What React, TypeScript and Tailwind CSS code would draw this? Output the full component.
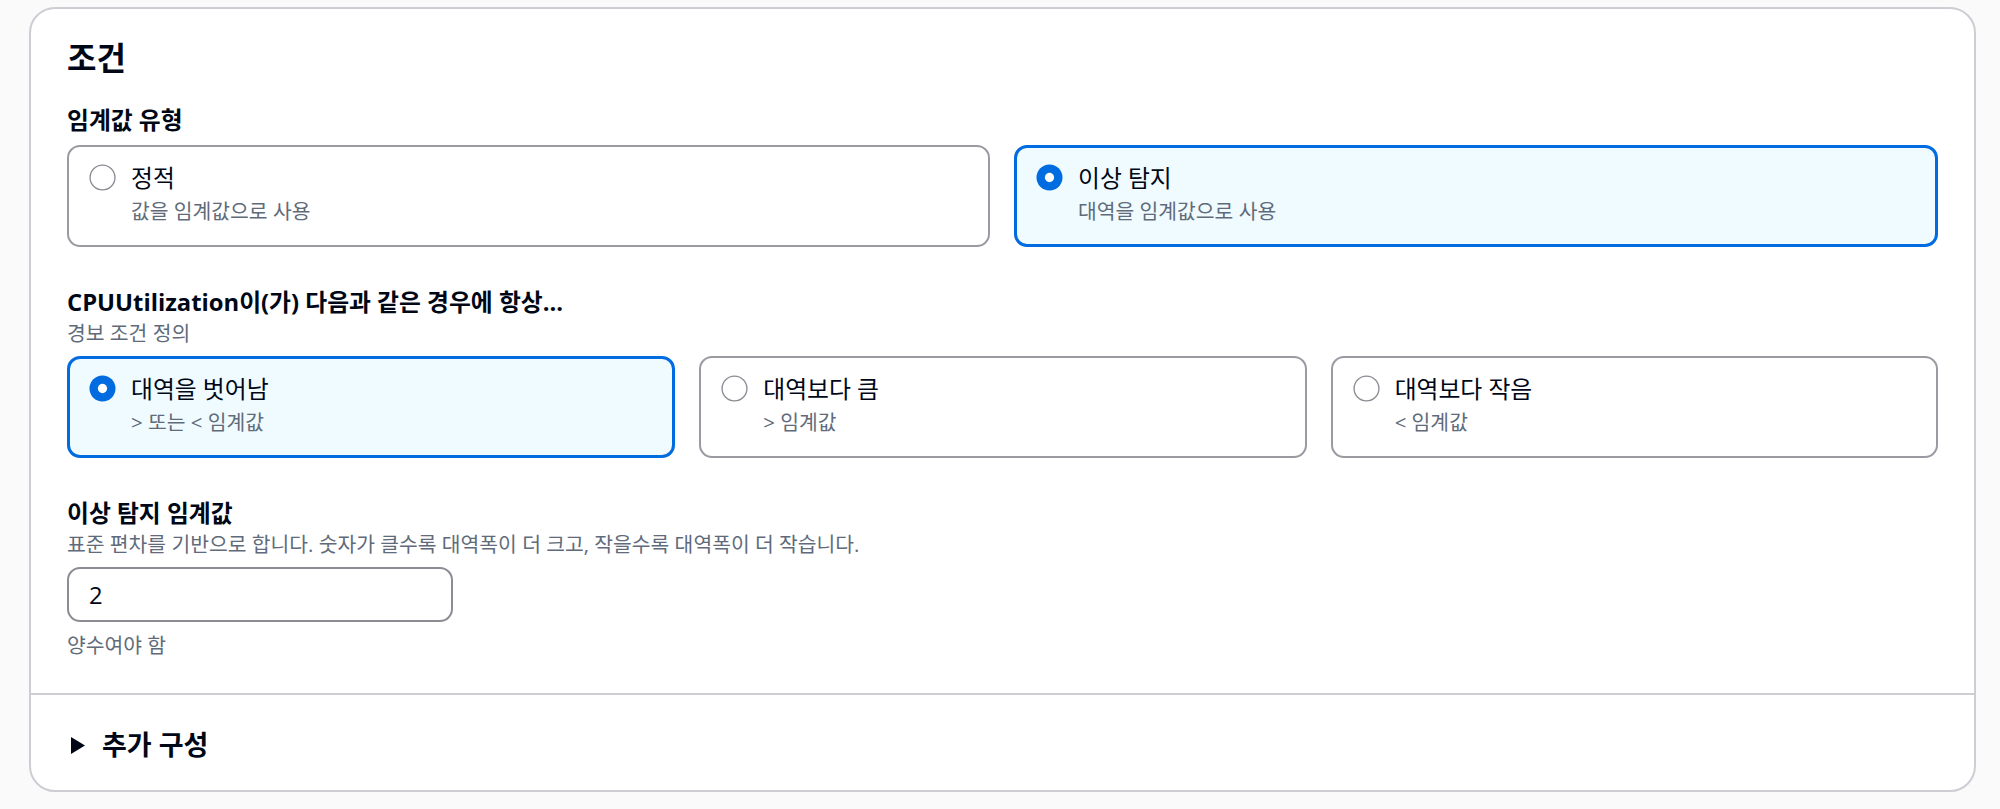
import React from "react";

const FONT = { fontFamily: '"Open Sans", "Noto Sans CJK KR", sans-serif' };

function Radio({ checked }: { checked: boolean }) {
  return (
    <svg width="27" height="27" viewBox="0 0 28 28" className="shrink-0">
      {checked ? (
        <>
          <circle cx="14" cy="14" r="13.5" fill="#006ce0" />
          <circle cx="14" cy="14" r="4.8" fill="#ffffff" />
        </>
      ) : (
        <circle cx="14" cy="14" r="12.9" fill="#ffffff" stroke="#8c8c94" strokeWidth="1.4" />
      )}
    </svg>
  );
}

interface TileProps {
  label: string;
  desc: string;
  checked?: boolean;
}

function Tile({ label, desc, checked = false }: TileProps) {
  return (
    <div
      className={`flex-1 rounded-[13px] h-[102px] ${
        checked
          ? "border-[3px] border-[#006ce0] bg-[#f0fbff] pt-[13.5px] pl-[19px]"
          : "border-2 border-[#9a9aa2] bg-white pt-[14.5px] pl-[20px]"
      }`}
    >
      <div className="flex items-center h-[32px] gap-[15px]">
        <Radio checked={checked} />
        <span className="text-[23.8px] leading-[32px] text-[#000716]">{label}</span>
      </div>
      <p className="pl-[42px] text-[20.4px] leading-[35px] text-[#5f6b7a]">{desc}</p>
    </div>
  );
}

function FieldLabel({ children }: { children: React.ReactNode }) {
  return <p className="text-[23.8px] leading-[32px] font-bold text-[#000716]">{children}</p>;
}

function FieldDesc({ children }: { children: React.ReactNode }) {
  return <p className="text-[20.4px] leading-[31px] text-[#5f6b7a]">{children}</p>;
}

export default function App() {
  return (
    <div className="min-h-screen bg-[#fafafa] pt-[7px]" style={FONT}>
      <div className="ml-[29px] w-[1947px] h-[785px] rounded-[26px] border-2 border-[#cdcdd3] bg-white overflow-hidden">
        {/* ─── 조건 ─── */}
        <div className="px-[36px] pt-[30px]">
          <h2 className="text-[32px] leading-[38px] font-bold text-[#000716]">조건</h2>

          {/* 임계값 유형 */}
          <div className="mt-[26.5px]">
            <FieldLabel>임계값 유형</FieldLabel>
            <div className="mt-[9.5px] flex gap-6">
              <Tile label="정적" desc="값을 임계값으로 사용" />
              <Tile label="이상 탐지" desc="대역을 임계값으로 사용" checked />
            </div>
          </div>

          {/* 경보 조건 */}
          <div className="mt-[39px]">
            <FieldLabel>CPUUtilization이(가) 다음과 같은 경우에 항상...</FieldLabel>
            <FieldDesc>경보 조건 정의</FieldDesc>
            <div className="mt-[7px] flex gap-6">
              <Tile label="대역을 벗어남" desc="> 또는 < 임계값" checked />
              <Tile label="대역보다 큼" desc="> 임계값" />
              <Tile label="대역보다 작음" desc="< 임계값" />
            </div>
          </div>

          {/* 이상 탐지 임계값 */}
          <div className="mt-[38.5px]">
            <FieldLabel>이상 탐지 임계값</FieldLabel>
            <FieldDesc>표준 편차를 기반으로 합니다. 숫자가 클수록 대역폭이 더 크고, 작을수록 대역폭이 더 작습니다.</FieldDesc>
            <div className="mt-[7.5px] w-[386px] h-[55px] rounded-[13px] border-2 border-[#8c8c94] bg-white flex items-center pl-[20px]">
              <span className="text-[23.8px] leading-[32px] text-[#000716]">2</span>
            </div>
            <p className="mt-[7.5px] text-[20.4px] leading-[31px] text-[#5f6b7a]">양수여야 함</p>
          </div>
        </div>

        <div className="mt-[32.5px] h-[2px] bg-[#cdcdd3]" />

        {/* ─── 추가 구성 ─── */}
        <div className="px-[36px] pt-[32px] flex items-center">
          <div className="h-[36px] flex items-center pl-[4px]">
            <svg width="14" height="17" viewBox="0 0 14 17">
              <polygon points="0,0 14,8.5 0,17" fill="#000716" />
            </svg>
          </div>
          <span className="ml-[17px] text-[27px] leading-[36px] font-bold text-[#000716]">추가 구성</span>
        </div>
      </div>
    </div>
  );
}
